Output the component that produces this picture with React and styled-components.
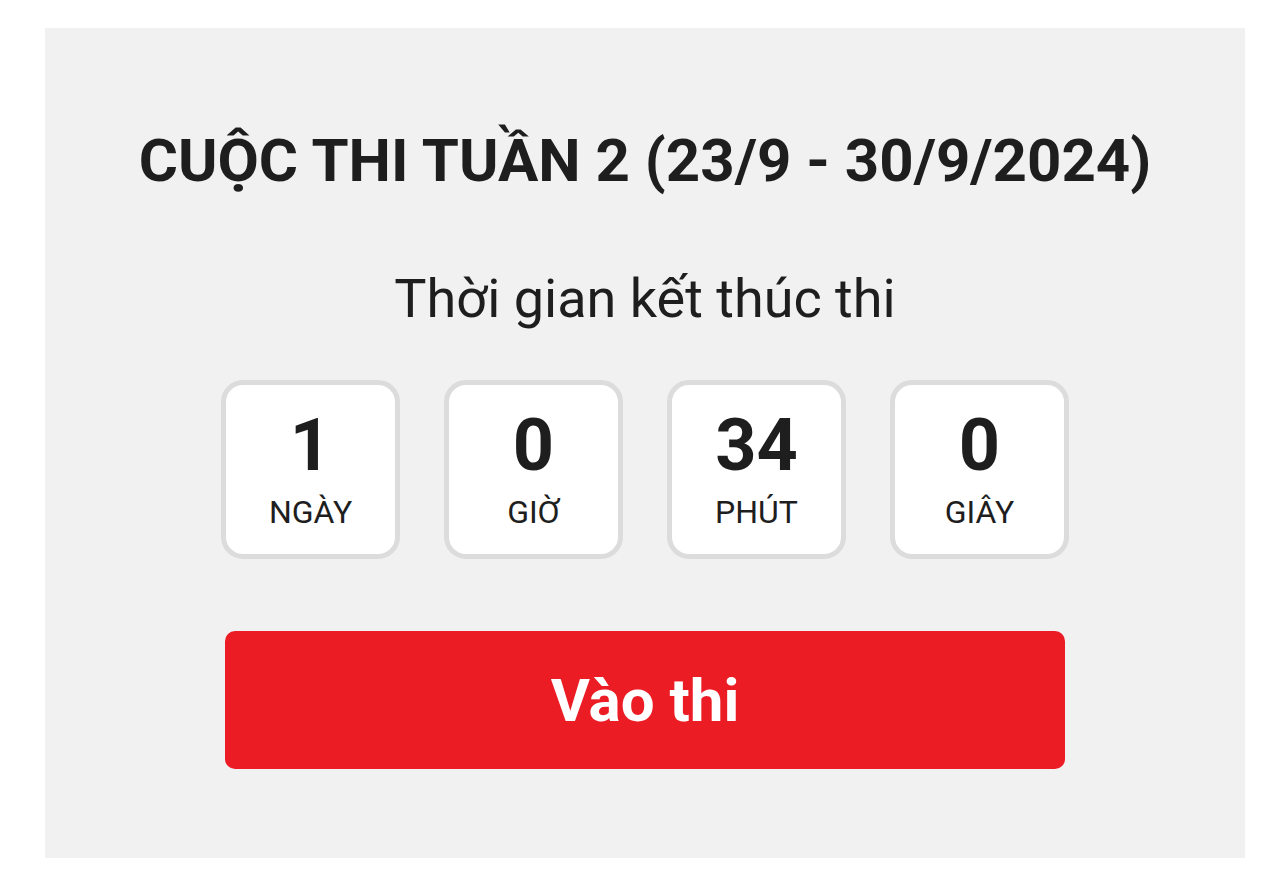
import styled, { createGlobalStyle } from "styled-components";

const GlobalStyle = createGlobalStyle`
  html, body {
    margin: 0;
    padding: 0;
    background: #ffffff;
  }
  body {
    font-family: Roboto, "Liberation Sans", Arial, sans-serif;
    color: #1f1f1f;
  }
`;

const countdown = [
  { value: 1, label: "NGÀY" },
  { value: 0, label: "GIỜ" },
  { value: 34, label: "PHÚT" },
  { value: 0, label: "GIÂY" },
];

export default function App() {
  return (
    <>
      <GlobalStyle />
      <Page>
        <Panel>
          <Title>CUỘC THI TUẦN 2 (23/9 - 30/9/2024)</Title>
          <Subtitle>Thời gian kết thúc thi</Subtitle>
          <Timer>
            {countdown.map((item) => (
              <TimeBox key={item.label}>
                <Value>{item.value}</Value>
                <Unit>{item.label}</Unit>
              </TimeBox>
            ))}
          </Timer>
          <EnterButton type="button">Vào thi</EnterButton>
        </Panel>
      </Page>
    </>
  );
}

const Page = styled.div`
  padding: 28px 27px 27px 45px;
`;

const Panel = styled.section`
  width: 1200px;
  height: 830px;
  box-sizing: border-box;
  background: #f1f1f1;
  display: flex;
  flex-direction: column;
  align-items: center;
  padding-top: 97px;
`;

const Title = styled.h1`
  margin: 0;
  font-size: 60px;
  line-height: 72px;
  font-weight: 700;
  color: #1e1e1e;
`;

const Subtitle = styled.p`
  margin: 70px 0 0;
  font-size: 54px;
  line-height: 64px;
  font-weight: 400;
  color: #1e1e1e;
`;

const Timer = styled.div`
  display: flex;
  gap: 44px;
  margin-top: 49px;
`;

const TimeBox = styled.div`
  width: 179px;
  height: 179px;
  box-sizing: border-box;
  border: 5px solid #dcdcdc;
  border-radius: 22px;
  background: #ffffff;
  display: flex;
  flex-direction: column;
  align-items: center;
  padding-top: 19px;
`;

const Value = styled.div`
  font-size: 72px;
  line-height: 84px;
  font-weight: 700;
  color: #1e1e1e;
`;

const Unit = styled.div`
  margin-top: 5px;
  font-size: 32px;
  line-height: 38px;
  color: #1e1e1e;
`;

const EnterButton = styled.button`
  margin-top: 72px;
  width: 840px;
  height: 138px;
  border: none;
  border-radius: 10px;
  background: #ec1c24;
  color: #ffffff;
  font-family: inherit;
  font-size: 60px;
  font-weight: 700;
  cursor: pointer;
`;
